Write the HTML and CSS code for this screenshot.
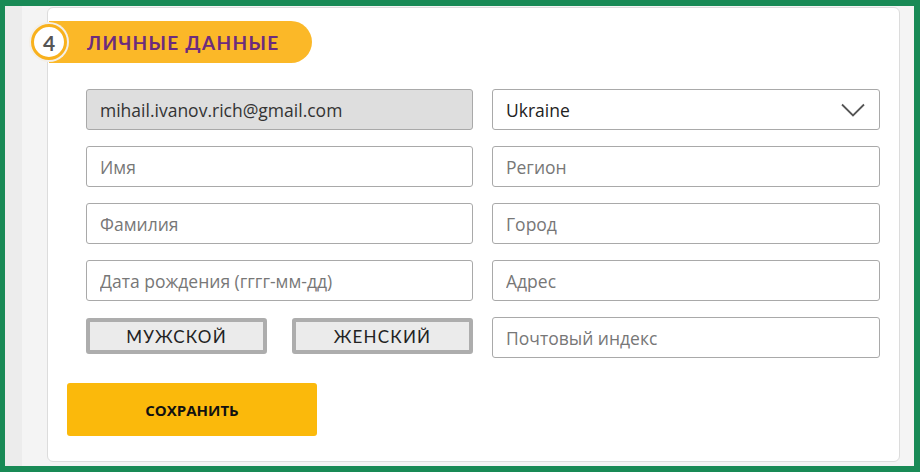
FILE: index.html
```html
<!DOCTYPE html>
<html>
<head>
    <title>Личные данные</title>
    <link rel="stylesheet" href="styles.css">
</head>
<body>
    <div class="page">
        <section class="card">
            <div class="step">
                <span class="step-num">4</span>
                <h2 class="step-title">ЛИЧНЫЕ ДАННЫЕ</h2>
            </div>

            <form class="profile">
                <div class="fields">
                    <input class="field field-locked" type="text" value="mihail.ivanov.rich@gmail.com" readonly>
                    <div class="field select">
                        <span>Ukraine</span>
                        <svg width="24" height="14" viewBox="0 0 24 14"><polyline points="1,1.5 12,12.5 23,1.5" fill="none" stroke="#555" stroke-width="1.8"/></svg>
                    </div>
                    <input class="field" type="text" placeholder="Имя">
                    <input class="field" type="text" placeholder="Регион">
                    <input class="field" type="text" placeholder="Фамилия">
                    <input class="field" type="text" placeholder="Город">
                    <input class="field" type="text" placeholder="Дата рождения (гггг-мм-дд)">
                    <input class="field" type="text" placeholder="Адрес">
                    <div class="gender">
                        <button type="button" class="gender-btn">МУЖСКОЙ</button>
                        <button type="button" class="gender-btn">ЖЕНСКИЙ</button>
                    </div>
                    <input class="field" type="text" placeholder="Почтовый индекс">
                </div>
                <button type="submit" class="save">СОХРАНИТЬ</button>
            </form>
        </section>
    </div>
</body>
</html>
```

FILE: styles.css
```css
html, body {
    margin: 0;
    height: 100%;
}

body {
    background-color: #198a56;
    padding: 6px 6px 6px 5px;
    box-sizing: border-box;
    font-family: "Open Sans", "Liberation Sans", sans-serif;
}

.page {
    height: 100%;
    box-sizing: border-box;
    padding: 1px 14px 4px 42px;
    background: linear-gradient(to right, #ececec 0, #ececec 17px, #f4f4f4 17px);
}

.card {
    height: 100%;
    box-sizing: border-box;
    background-color: #fff;
    border: 1px solid #dcdcdc;
    border-radius: 6px;
    padding: 13px 0 0 19px;
}

/* шаг 4 */
.step {
    display: flex;
    align-items: center;
    margin-left: -36px;
}

.step-num {
    position: relative;
    z-index: 1;
    width: 30px;
    height: 30px;
    border: 3px solid #f8b11d;
    border-radius: 50%;
    background-color: #fff;
    box-shadow: 0 0 0 2px #f3efe8;
    display: flex;
    align-items: center;
    justify-content: center;
    font-family: "Lato", sans-serif;
    font-weight: bold;
    font-size: 21px;
    color: #555;
}

.step-title {
    margin: 0 0 0 -18px;
    height: 42px;
    width: 225px;
    padding-left: 38px;
    box-sizing: content-box;
    background-color: #fbb828;
    border-radius: 0 21px 21px 0;
    display: flex;
    align-items: center;
    font-family: "Lato", sans-serif;
    font-weight: bold;
    font-size: 19px;
    letter-spacing: 1.3px;
    color: #6c2c7d;
}

.profile {
    padding-top: 26px;
}

.fields {
    display: grid;
    grid-template-columns: 387px 388px;
    grid-auto-rows: 41px;
    column-gap: 19px;
    row-gap: 16px;
    margin-left: 19px;
}

.field {
    box-sizing: border-box;
    height: 41px;
    margin: 0;
    border: 1px solid #a9a9a9;
    border-radius: 3px;
    background-color: #fff;
    padding: 0 13px;
    font-family: "Open Sans", sans-serif;
    font-size: 17.5px;
    color: #222;
    outline: none;
}

.field::placeholder {
    color: #777;
}

.field-locked {
    background-color: #dedede;
    color: #333;
}

.select {
    display: flex;
    align-items: center;
    justify-content: space-between;
    padding-right: 14px;
}

.gender {
    display: flex;
    gap: 25px;
    padding-top: 1px;
}

.gender-btn {
    width: 181px;
    height: 36px;
    box-sizing: border-box;
    border: 4px solid #adadad;
    border-radius: 3px;
    background-color: #ebebeb;
    font-family: "Lato", sans-serif;
    font-size: 17px;
    letter-spacing: 1.2px;
    color: #222;
    padding: 0;
}

.save {
    margin-top: 25px;
    width: 250px;
    height: 53px;
    border: none;
    border-radius: 3px;
    background-color: #fbb90b;
    font-family: "Open Sans", sans-serif;
    font-weight: bold;
    font-size: 15px;
    color: #111;
}
```
